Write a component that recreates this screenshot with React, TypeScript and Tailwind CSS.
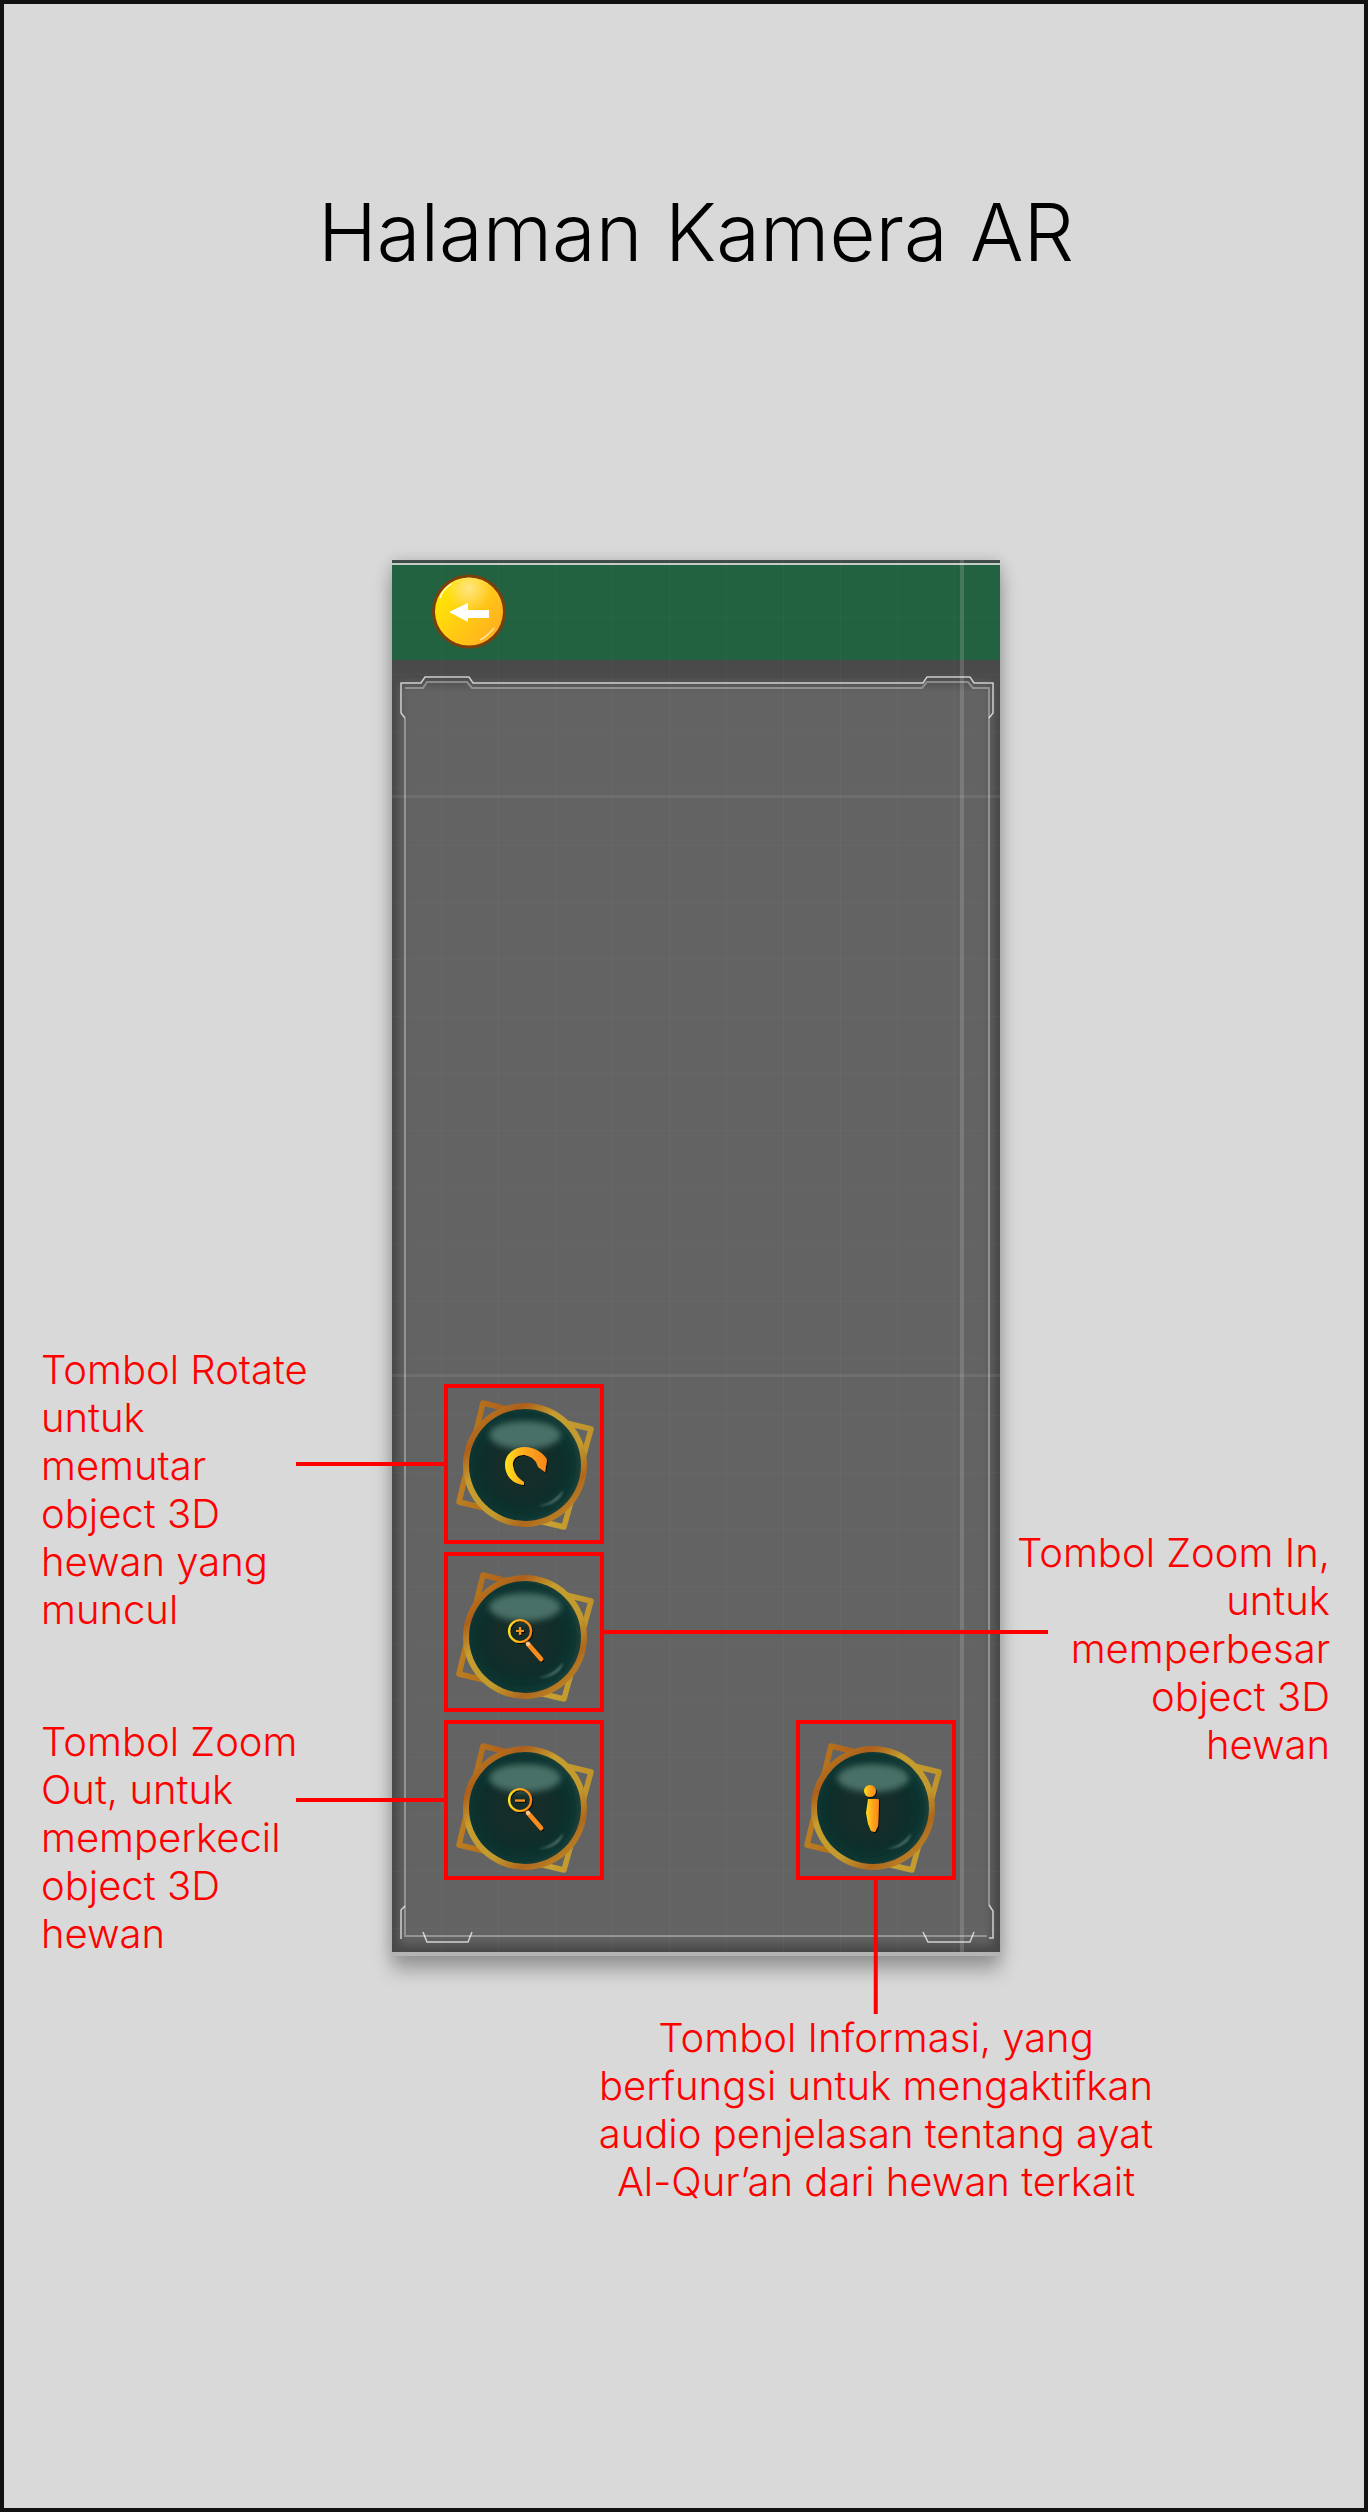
import React from "react";

type KnobIcon = "rotate" | "plus" | "minus" | "info";

function KnobDefs() {
  return (
    <defs>
      <radialGradient id="knobFace" cx="47%" cy="50%" r="52%">
        <stop offset="0%" stopColor="#132e2a" />
        <stop offset="68%" stopColor="#112e2a" />
        <stop offset="90%" stopColor="#0a3531" />
        <stop offset="100%" stopColor="#1d4038" />
      </radialGradient>
      <linearGradient id="knobRim" x1="0.1" y1="0" x2="0.9" y2="1">
        <stop offset="0%" stopColor="#bd8422" />
        <stop offset="20%" stopColor="#ae5f1b" />
        <stop offset="36%" stopColor="#c69d2f" />
        <stop offset="62%" stopColor="#c29a2e" />
        <stop offset="78%" stopColor="#ae681e" />
        <stop offset="100%" stopColor="#c4962d" />
      </linearGradient>
      <linearGradient id="knobRimLow" x1="0" y1="0" x2="1" y2="0">
        <stop offset="0%" stopColor="#bb7d20" />
        <stop offset="35%" stopColor="#b0621c" />
        <stop offset="65%" stopColor="#c8a131" />
        <stop offset="100%" stopColor="#c0932c" />
      </linearGradient>
      <linearGradient id="knobGlyph" x1="0" y1="0" x2="1" y2="0">
        <stop offset="0%" stopColor="#ffe11a" />
        <stop offset="45%" stopColor="#ffaa1d" />
        <stop offset="100%" stopColor="#f8861c" />
      </linearGradient>
      <filter id="knobSoft" x="-30%" y="-60%" width="160%" height="220%">
        <feGaussianBlur stdDeviation="3" />
      </filter>
      <filter id="knobGlint" x="-30%" y="-30%" width="160%" height="160%">
        <feGaussianBlur stdDeviation="0.8" />
      </filter>
      <filter id="knobRaster" x="-10%" y="-10%" width="120%" height="120%">
        <feGaussianBlur stdDeviation="0.6" />
      </filter>
      <filter id="glyphShadow" x="-40%" y="-40%" width="190%" height="190%">
        <feDropShadow dx="1" dy="1" stdDeviation="0.7" floodColor="#000" floodOpacity="0.9" />
      </filter>
    </defs>
  );
}

function KnobGlyph({ icon }: { icon: KnobIcon }) {
  if (icon === "rotate") {
    return (
      <path
        d="M-1 20 C-12 19 -20 11 -20 0 C-20 -11 -11 -18 0 -18 C9 -18 17 -13 21 -7 L22 -5 L20 7 L13 2 L11 -3 C7 -8 3 -10 -2 -10 C-9 -10 -13 -5 -12 1 C-11 9 -6 14 -1 17 Z"
        fill="url(#knobGlyph)"
        filter="url(#glyphShadow)"
      />
    );
  }
  if (icon === "info") {
    return (
      <g fill="url(#knobGlyph)" filter="url(#glyphShadow)">
        <circle cx="-3" cy="-17" r="6" />
        <path d="M-5 -9 L5 -9 C6 -9 6 -7 6 -6 L5 18 L2 24 L-2 23 L-5 16 L-7 5 Z" />
      </g>
    );
  }
  const dy = icon === "plus" ? 0 : 2;
  return (
    <g filter="url(#glyphShadow)" transform={`translate(0 ${-dy})`}>
      <circle cx="-5" cy="-6" r="11" fill="none" stroke="url(#knobGlyph)" strokeWidth="2.2" />
      <path d="M3 7 L16 22" stroke="#f78c1e" strokeWidth="4.5" strokeLinecap="round" />
      <circle cx="3" cy="7" r="2" fill="#f6c9a0" />
      {icon === "plus" ? (
        <path d="M-5 -10 L-5 -2 M-9 -6 L-1 -6" stroke="#f7941d" strokeWidth="2.2" />
      ) : (
        <path d="M-10 -5.5 L0 -5.5" stroke="#f7941d" strokeWidth="2.2" />
      )}
    </g>
  );
}

function Knob({ icon, cx, cy }: { icon: KnobIcon; cx: number; cy: number }) {
  return (
    <svg viewBox="4 4 152 152" className="block h-full w-full">
      <KnobDefs />
      <g transform={`translate(${cx} ${cy})`}>
        <g filter="url(#knobRaster)">
          <path
            d="M-42 -62 L66 -36 L39 62 L-66 37 Z"
            fill="none"
            stroke="url(#knobRimLow)"
            strokeWidth="5.5"
            strokeLinejoin="round"
          />
          <circle r="62" fill="url(#knobRim)" />
          <circle r="56" fill="url(#knobFace)" />
        </g>
        <ellipse cx="0" cy="-30" rx="36" ry="14" fill="#4a7066" filter="url(#knobSoft)" />
        <path
          d="M14 41 C24 39 33 33 38 25 C38 32 28 41 14 41 Z"
          fill="#6d8c84"
          opacity="0.75"
          filter="url(#knobGlint)"
        />
        <KnobGlyph icon={icon} />
      </g>
    </svg>
  );
}

function BackButton() {
  return (
    <svg viewBox="0 0 74 75" className="block h-[75px] w-[74px]">
      <defs>
        <linearGradient id="backFace" x1="0" y1="0" x2="1" y2="0.7">
          <stop offset="0%" stopColor="#fff000" />
          <stop offset="55%" stopColor="#ffcc12" />
          <stop offset="100%" stopColor="#ffb020" />
        </linearGradient>
        <radialGradient id="backGloss" cx="50%" cy="16%" r="34%">
          <stop offset="0%" stopColor="#ffe58a" stopOpacity="0.95" />
          <stop offset="100%" stopColor="#ffe58a" stopOpacity="0" />
        </radialGradient>
      </defs>
      <circle cx="37" cy="37.5" r="37" fill="#7c3f0c" />
      <circle cx="37" cy="37.5" r="34" fill="url(#backFace)" />
      <circle cx="37" cy="37.5" r="34" fill="url(#backGloss)" />
      <path d="M8 24 C10 18 13 14 19 10" fill="none" stroke="#fff" strokeWidth="1.5" opacity="0.85" />
      <path d="M48 66 C54 63 58 59 62 54" fill="none" stroke="#fff" strokeWidth="1.5" opacity="0.6" />
      <path d="M17 38 L36 29 L36 36 L57 36 L57 44 L36 44 L36 48 Z" fill="#fff" />
    </svg>
  );
}

function HudFrame() {
  return (
    <svg viewBox="0 0 608 1392" className="pointer-events-none absolute inset-0 h-full w-full" fill="none">
      <path
        d="M13 158 L13 1376 L595 1376 M13 128 L31 128 L35 122 L75 122 L80 128 L530 128 L535 122 L576 122 L581 128 L597 128 L597 1345"
        stroke="#ffffff"
        strokeOpacity="0.32"
        strokeWidth="2"
      />
      <path
        d="M13 158 L9 153 L9 123 L29 123 L33 117 L77 117 L81 123 L531 123 L535 117 L578 117 L582 123 L601 123 L601 153 L597 158"
        stroke="#ffffff"
        strokeOpacity="0.72"
        strokeWidth="1.5"
      />
      <path
        d="M13 1346 L9 1350 L9 1379 M31 1372 L35 1382 L76 1382 L80 1372 M531 1372 L536 1382 L578 1382 L582 1372 M597 1345 L601 1351 L601 1378 L597 1378"
        stroke="#ffffff"
        strokeOpacity="0.72"
        strokeWidth="1.5"
      />
    </svg>
  );
}

function Hotspot({ icon, cx, cy, children }: { icon: KnobIcon; cx: number; cy: number; children?: React.ReactNode }) {
  return (
    <div className="relative h-40 w-40 border-4 border-[#ff0000]">
      <Knob icon={icon} cx={cx} cy={cy} />
      {children}
    </div>
  );
}

function Note({ lines, className }: { lines: string[]; className?: string }) {
  return (
    <p className={`whitespace-nowrap text-[40px] leading-[48px] font-light text-[#ff0000] ${className ?? ""}`}>
      {lines.map((line) => (
        <span key={line} className="block">
          {line}
        </span>
      ))}
    </p>
  );
}

export default function App() {
  return (
    <div
      className="h-[2512px] w-[1368px] overflow-hidden border-4 border-[#111111] bg-[#d9d9d9] text-black"
      style={{ fontFamily: "Inter, 'Liberation Sans', sans-serif" }}
    >
      <h1 className="pt-[184px] pl-6 text-center text-[79.5px] leading-[88px] font-light">Halaman Kamera AR</h1>

      <div className="mt-[284px] flex items-start">
        <div className="flex w-[388px] flex-col gap-[84px] pt-[786px] pl-[37px]">
          <Note lines={["Tombol Rotate", "untuk", "memutar", "object 3D", "hewan yang", "muncul"]} />
          <Note lines={["Tombol Zoom", "Out, untuk", "memperkecil", "object 3D", "hewan"]} />
        </div>

        {/* Phone mockup with the annotated buttons */}
        <div className="relative h-[1396px] w-[608px] border-b-4 border-[#b4b4b4] shadow-[0_14px_18px_rgba(0,0,0,0.28),0_0_14px_rgba(0,0,0,0.14)]">
          <div className="flex h-full flex-col bg-[#636363]">
            <div className="h-[3px] bg-[#3f4d47]" />
            <div className="h-[2px] bg-[#c3cbc7]" />
            <div className="h-[95px] bg-[#236240] pt-[9px] pl-10">
              <BackButton />
            </div>
            <div className="relative flex flex-1 flex-col justify-end gap-2 pb-[72px] pl-[52px] shadow-[inset_0_0_10px_7px_rgba(60,60,60,0.7)]">
              <div className="absolute inset-x-0 top-0 h-8 bg-gradient-to-b from-[#4a4a4a] via-[#4a4a4a] to-[#4a4a4a00]" />
              <div className="relative z-10 w-40">
                <Hotspot icon="rotate" cx={81} cy={81}>
                  <div className="absolute top-[74px] right-full h-1 w-[152px] bg-[#ff0000]" />
                </Hotspot>
              </div>
              <div className="relative z-10 w-40">
                <Hotspot icon="plus" cx={81} cy={85}>
                  <div className="absolute top-[74px] left-full h-1 w-[448px] bg-[#ff0000]" />
                </Hotspot>
              </div>
              <div className="relative z-10 flex gap-[192px]">
                <Hotspot icon="minus" cx={81} cy={88}>
                  <div className="absolute top-[74px] right-full h-1 w-[152px] bg-[#ff0000]" />
                </Hotspot>
                <Hotspot icon="info" cx={77} cy={88}>
                  <div className="absolute top-full left-1/2 flex -translate-x-1/2 flex-col items-center">
                    <div className="h-[138px] w-1 bg-[#ff0000]" />
                    <Note
                      className="text-center"
                      lines={[
                        "Tombol Informasi, yang",
                        "berfungsi untuk mengaktifkan",
                        "audio penjelasan tentang ayat",
                        "Al-Qur’an dari hewan terkait",
                      ]}
                    />
                  </div>
                </Hotspot>
              </div>
            </div>
          </div>

          <HudFrame />

          {/* Faint layout grid and guide lines left on the mockup */}
          <div className="pointer-events-none absolute inset-0 bg-[linear-gradient(90deg,rgba(255,255,255,0.025)_1px,transparent_1px),linear-gradient(rgba(255,255,255,0.02)_1px,transparent_1px)] bg-[size:57px_57px] bg-[position:49px_0]" />
          <div className="pointer-events-none absolute inset-y-0 left-[568px] w-1 bg-white/15" />
          <div className="pointer-events-none absolute inset-x-0 top-[235px] h-[3px] bg-white/[0.07]" />
          <div className="pointer-events-none absolute inset-x-0 top-[814px] h-[3px] bg-white/[0.07]" />
        </div>

        <div className="flex flex-1 justify-end pt-[969px] pr-[34px]">
          <Note className="text-right" lines={["Tombol Zoom In,", "untuk", "memperbesar", "object 3D", "hewan"]} />
        </div>
      </div>
    </div>
  );
}
